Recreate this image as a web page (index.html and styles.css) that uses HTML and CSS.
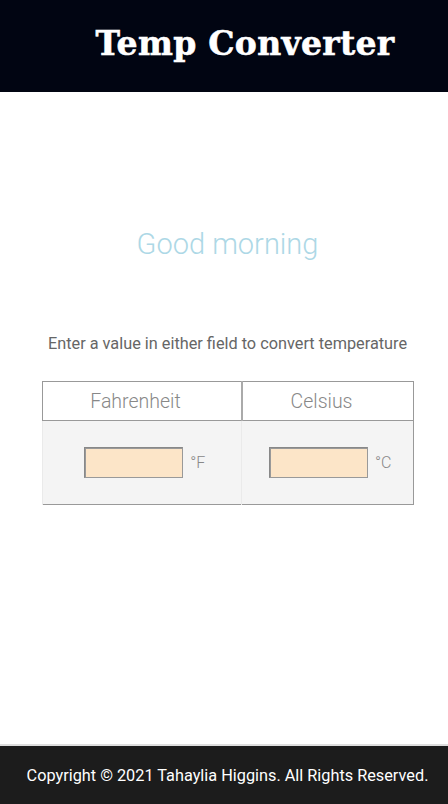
FILE: index.html
```html
<!DOCTYPE html>
<html lang="en">
<head>
    <meta charset="UTF-8">
    <meta name="viewport" content="width=device-width, initial-scale=1.0">
    <title>Temp Converter</title>
    <link rel="stylesheet" href="styles.css">
</head>
<body>
    <header class="top-bar">
        <h1>Temp Converter</h1>
    </header>

    <main class="content">
        <h2 class="greeting">Good morning</h2>
        <p class="hint">Enter a value in either field to convert temperature</p>

        <table class="converter">
            <tr>
                <th class="col-f">Fahrenheit</th>
                <th class="col-c">Celsius</th>
            </tr>
            <tr>
                <td>
                    <input type="text" id="fahrenheit" class="temp-input">
                    <span class="unit">°F</span>
                </td>
                <td>
                    <input type="text" id="celsius" class="temp-input">
                    <span class="unit">°C</span>
                </td>
            </tr>
        </table>
    </main>

    <footer class="bottom-bar">
        <p>Copyright © 2021 Tahaylia Higgins. All Rights Reserved.</p>
    </footer>
</body>
</html>
```

FILE: styles.css
```css
html, body {
    margin: 0;
    padding: 0;
}
body {
    font-family: Roboto, "Liberation Sans", sans-serif;
    min-height: 100vh;
    display: flex;
    flex-direction: column;
}
.top-bar {
    background-color: #010512;
    height: 92px;
    display: flex;
    align-items: center;
    justify-content: center;
    padding-left: 42px;
    box-sizing: border-box;
}
.top-bar h1 {
    margin: 0;
    color: white;
    font-family: "DejaVu Serif", serif;
    font-weight: 900;
    font-size: 33px;
    letter-spacing: 0.3px;
    padding-bottom: 6px;
    -webkit-text-stroke: 0.6px white;
}
.content {
    flex: 1;
    display: flex;
    flex-direction: column;
    align-items: center;
    padding-left: 7px;
}
.greeting {
    margin: 135px 0 0;
    font-weight: 300;
    font-size: 29px;
    color: lightblue;
}
.hint {
    margin: 73px 0 0;
    font-size: 16.3px;
    color: #666;
}
.converter {
    margin-top: 28px;
    width: 372px;
    border-collapse: collapse;
    border: 1px solid #999;
}
.converter th {
    height: 38px;
    padding: 0 12px 0 0;
    font-weight: 300;
    font-size: 19.5px;
    color: #888;
    background-color: white;
    border-bottom: 1px solid #999;
}
.col-f {
    width: 186px;
    border-right: 2px solid #aaa;
}
.converter td {
    height: 83px;
    padding: 0 0 0 4px;
    text-align: center;
    background-color: #f4f4f4;
    border-left: 1px solid #eaeaea;
}
.temp-input {
    width: 99px;
    height: 31px;
    box-sizing: border-box;
    background-color: #fce5c8;
    border: 1px solid #888;
    border-right-color: #999;
    border-bottom-color: #999;
    box-shadow: inset 1px 1px 0 #999;
    vertical-align: middle;
    margin-left: 2px;
}
.unit {
    font-weight: 300;
    font-size: 16px;
    color: #888;
    margin-left: 3px;
    vertical-align: middle;
}
.bottom-bar {
    background-color: #1c1c1c;
    height: 58px;
    display: flex;
    align-items: center;
    justify-content: center;
    padding-left: 7px;
    border-top: 2px solid #ddd;
}
.bottom-bar p {
    margin: 0;
    color: white;
    font-size: 16.3px;
}
```
